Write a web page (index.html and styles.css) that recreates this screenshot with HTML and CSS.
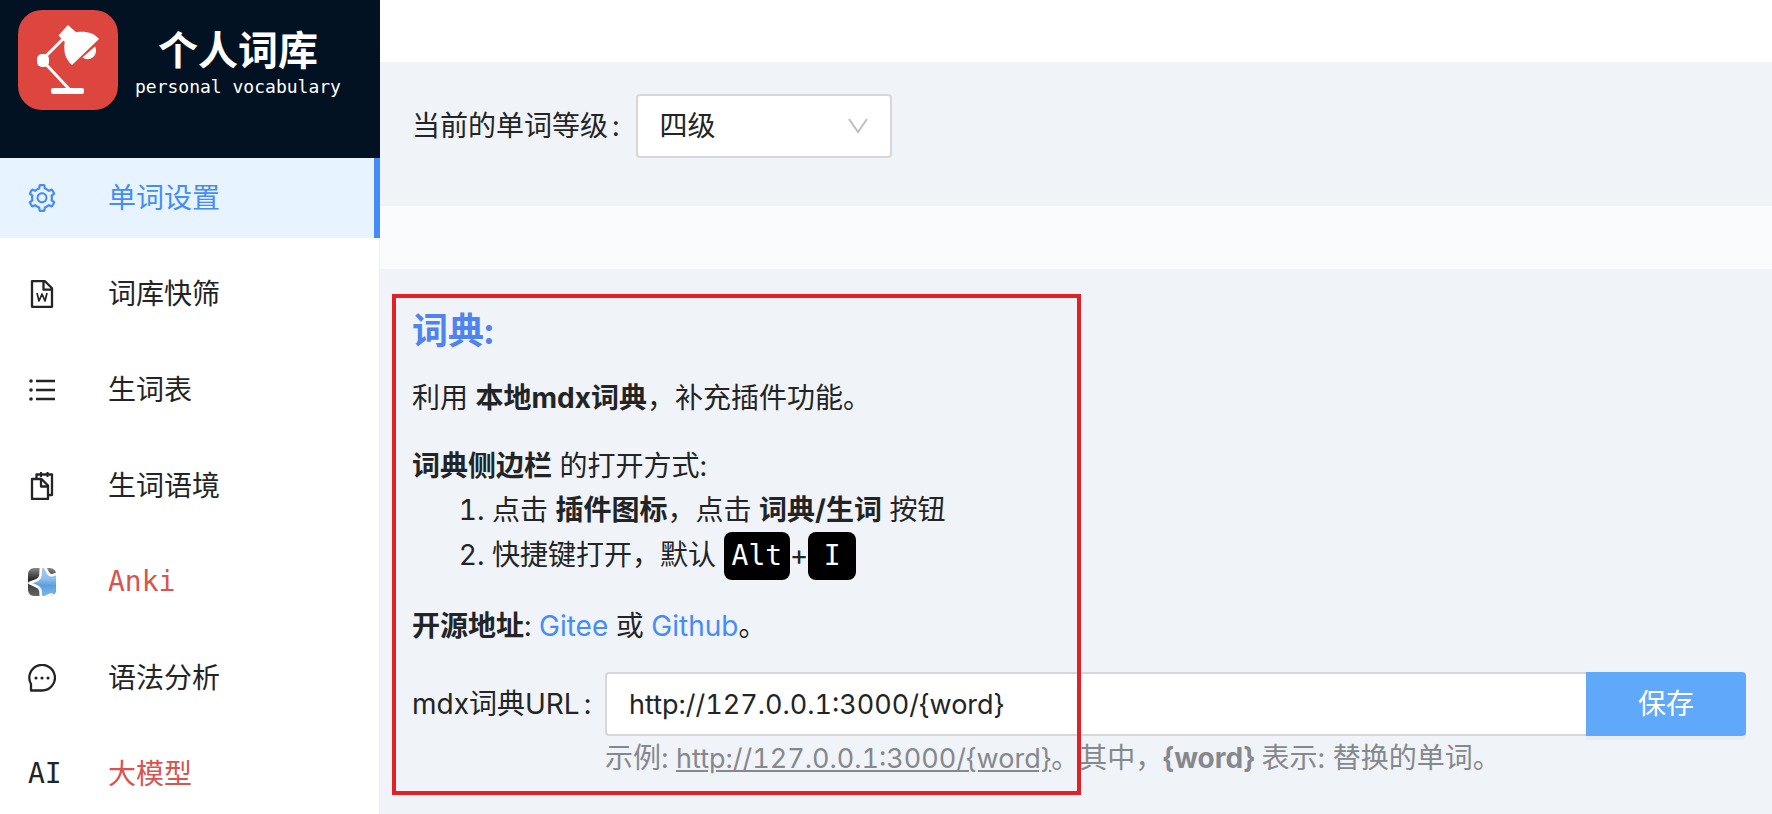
FILE: index.html
```html
<!DOCTYPE html>
<html lang="zh-CN">
<head>
<meta charset="utf-8">
<title>个人词库</title>
<link rel="stylesheet" href="styles.css">
</head>
<body>
<div class="layout">
  <aside class="sidebar">
    <header class="brand">
      <svg class="brand-logo" viewBox="0 0 100 100" aria-hidden="true">
        <rect width="100" height="100" rx="24" fill="#dc463e"/>
        <path d="M24 50 47 27M24 50 51 79" fill="none" stroke="#fff" stroke-width="3"/>
        <g fill="#fff">
          <path d="M41.500 25.500 50 16 58 23 48 32Z" stroke="#fff" stroke-width="1.500" stroke-linejoin="round"/>
          <path d="M55 23C64 20 76 22 81 29L54 55C47 49 45 41 47 30Z"/>
          <path d="M77 36.500A8.500 8.500 0 0 1 64.500 47.500Z"/>
          <rect x="19" y="44" width="12" height="13" rx="5"/>
          <rect x="33" y="78" width="33" height="6" rx="2"/>
        </g>
      </svg>
      <div class="brand-text">
        <h1 class="brand-title">个人词库</h1>
        <p class="brand-subtitle">personal vocabulary</p>
      </div>
    </header>
    <nav class="nav">
      <ul class="menu">
        <li><a class="menu-item menu-item-active" href="#settings" aria-current="page">
          <svg class="icon" viewBox="64 64 896 896" fill="currentColor" aria-hidden="true"><path d="M924.8 625.7l-65.5-56c3.1-19 4.7-38.4 4.7-57.8s-1.6-38.8-4.7-57.8l65.5-56a32.03 32.03 0 009.3-35.2l-.9-2.6a443.74 443.74 0 00-79.7-137.9l-1.8-2.1a32.12 32.12 0 00-35.1-9.5l-81.3 28.9c-30-24.6-63.5-44-99.7-57.6l-15.7-85a32.05 32.05 0 00-25.8-25.7l-2.7-.5c-52.1-9.4-106.9-9.4-159 0l-2.7.5a32.05 32.05 0 00-25.8 25.7l-15.8 85.4a351.86 351.86 0 00-99 57.4l-81.9-29.1a32 32 0 00-35.1 9.5l-1.8 2.1a446.02 446.02 0 00-79.7 137.9l-.9 2.6c-4.5 12.5-.8 26.5 9.3 35.2l66.3 56.6c-3.1 18.8-4.6 38-4.6 57.1 0 19.2 1.5 38.4 4.6 57.1L99 625.5a32.03 32.03 0 00-9.3 35.2l.9 2.6c18.1 50.4 44.9 96.9 79.7 137.9l1.8 2.1a32.12 32.12 0 0035.1 9.5l81.9-29.1c29.8 24.5 63.1 43.9 99 57.4l15.8 85.4a32.05 32.05 0 0025.8 25.7l2.7.5a449.4 449.4 0 00159 0l2.7-.5a32.05 32.05 0 0025.8-25.7l15.7-85a350 350 0 0099.7-57.6l81.3 28.9a32 32 0 0035.1-9.5l1.8-2.1c34.8-41.1 61.6-87.5 79.7-137.9l.9-2.6c4.500-12.300.800-26.300-9.300-35zM788.3 465.9c2.5 15.1 3.8 30.6 3.8 46.1s-1.3 31-3.8 46.1l-6.6 40.1 74.7 63.9a370.03 370.03 0 01-42.6 73.6L721 702.8l-31.4 25.8c-23.9 19.6-50.5 35-79.3 45.8l-38.1 14.3-17.9 97a377.5 377.5 0 01-85 0l-17.9-97.2-37.8-14.5c-28.5-10.8-55-26.2-78.7-45.7l-31.4-25.9-93.4 33.2c-17-22.9-31.2-47.6-42.6-73.6l75.5-64.5-6.5-40c-2.4-14.9-3.7-30.3-3.7-45.5 0-15.3 1.2-30.6 3.7-45.5l6.5-40-75.5-64.5c11.3-26.1 25.6-50.7 42.6-73.6l93.4 33.2 31.4-25.9c23.7-19.5 50.2-34.9 78.7-45.7l37.9-14.3 17.9-97.2c28.1-3.2 56.8-3.2 85 0l17.9 97 38.1 14.3c28.7 10.8 55.4 26.2 79.3 45.8l31.4 25.8 92.8-32.9c17 22.9 31.2 47.6 42.6 73.6L781.8 426l6.5 39.9zM512 326c-97.2 0-176 78.8-176 176s78.8 176 176 176 176-78.8 176-176-78.8-176-176-176zm79.2 255.2A111.6 111.6 0 01512 614c-29.9 0-58-11.7-79.2-32.8A111.6 111.6 0 01400 502c0-29.9 11.7-58 32.8-79.2C454 401.6 482.1 390 512 390c29.9 0 58 11.6 79.2 32.8A111.6 111.6 0 01624 502c0 29.9-11.7 58-32.8 79.2z"/></svg>
          <span>单词设置</span></a></li>
        <li><a class="menu-item" href="#filter">
          <svg class="icon" viewBox="0 0 28 28" fill="none" stroke="currentColor" stroke-width="2.3" stroke-linejoin="round" aria-hidden="true"><path d="M4 1.200h13l7 7v18.600H4zM15.500 1.200v8.500H24"/><path d="M9 13l2 8 3-7 3 7 2-8" stroke-width="1.700"/></svg>
          <span>词库快筛</span></a></li>
        <li><a class="menu-item" href="#words">
          <svg class="icon" viewBox="0 0 28 28" fill="none" stroke="currentColor" stroke-width="2.300" aria-hidden="true"><path d="M8 5h19M8 14h19M8 23h19"/><g fill="currentColor" stroke="none"><circle cx="3" cy="5" r="1.800"/><circle cx="3" cy="14" r="1.800"/><circle cx="3" cy="23" r="1.800"/></g></svg>
          <span>生词表</span></a></li>
        <li><a class="menu-item" href="#context">
          <svg class="icon" viewBox="0 0 28 28" fill="none" stroke="currentColor" stroke-width="2.300" stroke-linejoin="round" aria-hidden="true"><path d="M8.500 6V2.500H24V23h-3"/><path d="M13 0v5M19.500 0v5" stroke-width="2"/><path d="M4 7h9.500l6.500 6.500V27H4zM13 7v7.500h7"/></svg>
          <span>生词语境</span></a></li>
        <li><a class="menu-item menu-item-accent menu-item-mono" href="#anki">
          <svg class="icon" viewBox="0 0 28 28" aria-hidden="true">
            <defs><linearGradient id="star" x1="0" y1="0" x2="0" y2="1"><stop offset="0" stop-color="#a9cdef"/><stop offset=".4" stop-color="#8fbfec"/><stop offset=".6" stop-color="#5b9fe0"/><stop offset="1" stop-color="#8dbdec"/></linearGradient>
            <linearGradient id="plate" x1="0" y1="0" x2="0" y2="1"><stop offset="0" stop-color="#888"/><stop offset=".4" stop-color="#2c2c2c"/><stop offset="1" stop-color="#666"/></linearGradient>
            <clipPath id="tile"><rect width="28" height="28" rx="6"/></clipPath></defs>
            <g clip-path="url(#tile)"><rect width="28" height="28" fill="url(#plate)"/>
            <path d="M13-3 12.500 7Q12 11 8 12.500L1.500 15 8 18Q12 19.500 12.500 23L13 31 23 26.500 31 30V5L25 7Q21 8 19.500 4L16-3Z" fill="url(#star)" stroke="#fff" stroke-width="2.600" stroke-linejoin="round"/></g>
          </svg>
          <span>Anki</span></a></li>
        <li><a class="menu-item" href="#grammar">
          <svg class="icon" viewBox="0 0 28 28" fill="none" stroke="currentColor" stroke-width="2.300" aria-hidden="true"><path d="M3 26.500H14A12.800 12.800 0 1 0 3 20z" stroke-linejoin="round"/><g fill="currentColor" stroke="none"><circle cx="8" cy="14" r="1.600"/><circle cx="14" cy="14" r="1.600"/><circle cx="20" cy="14" r="1.600"/></g></svg>
          <span>语法分析</span></a></li>
        <li><a class="menu-item menu-item-accent" href="#model">
          <span class="icon icon-text">AI</span>
          <span>大模型</span></a></li>
      </ul>
    </nav>
  </aside>

  <main class="content">
    <div class="topbar"></div>
    <section class="panel level-panel">
      <label class="field-label" for="level">当前的单词等级<span class="colon">:</span></label>
      <div class="select">
        <select id="level" class="select-box"><option>四级</option><option>六级</option></select>
        <svg class="select-arrow" viewBox="0 0 20 16" fill="none" stroke="#bfbfbf" stroke-width="2" aria-hidden="true"><path d="M1 1l9 13 9-13"/></svg>
      </div>
    </section>
    <section class="panel dict-panel">
      <h2 class="panel-title">词典:</h2>
      <p class="text">利用 <strong>本地mdx词典</strong>，补充插件功能。</p>
      <div class="text">
        <p><strong>词典侧边栏</strong> 的打开方式:</p>
        <ol class="steps">
          <li>点击 <strong>插件图标</strong>，点击 <strong>词典/生词</strong> 按钮</li>
          <li>快捷键打开，默认 <kbd>Alt</kbd>+<kbd>I</kbd></li>
        </ol>
      </div>
      <p class="text"><strong>开源地址</strong>: <a class="link" href="#gitee">Gitee</a> 或 <a class="link" href="#github">Github</a>。</p>
      <form class="url-form">
        <label class="field-label" for="url">mdx词典URL<span class="colon">:</span></label>
        <div class="url-field">
          <div class="url-group">
            <input id="url" class="url-input" type="text" value="http://127.0.0.1:3000/{word}">
            <button class="save" type="button">保存</button>
          </div>
          <p class="hint">示例: <u class="hint-url">http://127.0.0.1:3000/{word}</u>。其中，<strong>{word}</strong> 表示: 替换的单词。</p>
        </div>
      </form>
      <div class="highlight"></div>
    </section>
  </main>
</div>
</body>
</html>
```

FILE: styles.css
```css
* {
  box-sizing: border-box;
}

body,
h1,
h2,
p,
ul,
ol {
  margin: 0;
  padding: 0;
}

body {
  font-family: Inter, "Noto Sans CJK SC", sans-serif;
  font-size: 28px;
  line-height: 44px;
  font-variant-numeric: tabular-nums;
  color: #222426;
  background: #f0f3f8;
}

.layout {
  display: flex;
  height: 100vh;
  overflow: hidden;
}

.sidebar {
  display: flex;
  flex: none;
  flex-direction: column;
  width: 380px;
  background: #fff;
}

.brand {
  display: flex;
  flex: none;
  gap: 17px;
  height: 158px;
  padding: 10px 18px;
  background: #021222;
  color: #fff;
}

.brand-logo {
  flex: none;
  width: 100px;
  height: 100px;
}

.brand-text {
  padding-top: 17px;
  text-align: center;
}

.brand-title {
  font-size: 40px;
  line-height: 48px;
  font-weight: 700;
}

.brand-subtitle {
  font-family: "DejaVu Sans Mono", monospace;
  font-size: 18px;
  line-height: 24px;
}

.nav {
  flex: 1;
  box-shadow: inset -1px 0 #eceef0;
}

.menu {
  display: flex;
  flex-direction: column;
  gap: 16px;
  list-style: none;
}

.menu-item {
  display: flex;
  align-items: center;
  gap: 52px;
  height: 80px;
  padding-left: 28px;
  color: #222426;
  text-decoration: none;
}

.menu-item-active {
  background: #e7f4ff;
  border-right: 6px solid #468cf5;
  color: #468cf5;
}

.menu-item-accent {
  color: #d9534f;
}

.menu-item-mono,
.icon-text {
  font-family: "DejaVu Sans Mono", monospace;
}

.icon {
  flex: none;
  width: 28px;
  height: 28px;
}

.icon-text {
  color: #222426;
  line-height: 28px;
}

.content {
  flex: 1;
  min-width: 0;
}

.topbar {
  height: 62px;
  background: #fff;
}

.panel {
  padding: 32px 26px 32px 32px;
  background: #f0f3f8;
}

.level-panel {
  display: flex;
  height: 144px;
}

.field-label {
  flex: none;
  line-height: 64px;
  white-space: nowrap;
}

.colon {
  margin: 0 16px 0 4px;
}

.select {
  position: relative;
  width: 256px;
  height: 64px;
}

.select-box {
  width: 100%;
  height: 100%;
  padding: 0 22px;
  appearance: none;
  border: 2px solid #d5d7da;
  border-radius: 4px;
  background: #fff;
  color: inherit;
  font: inherit;
}

.select-arrow {
  position: absolute;
  top: 24px;
  right: 24px;
  width: 20px;
  height: 16px;
  pointer-events: none;
}

.dict-panel {
  position: relative;
  border-top: 63px solid #fafbfd;
  min-height: 608px;
}

.panel-title {
  margin-bottom: 15px;
  font-size: 36px;
  line-height: 60px;
  font-weight: 700;
  color: #4f83ee;
}

.text {
  margin-bottom: 24px;
}

.steps {
  padding-left: 80px;
}

kbd {
  display: inline-block;
  min-width: 48px;
  padding: 0 8px;
  border-radius: 8px;
  background: #000;
  color: #fff;
  font-family: "DejaVu Sans Mono", monospace;
  font-size: 28px;
  line-height: 48px;
  text-align: center;
}

.link {
  color: #468cf5;
  text-decoration: none;
}

.url-form {
  display: grid;
  grid-template-columns: 193px 1fr;
}

.url-field {
  min-width: 0;
}

.url-group {
  display: flex;
  height: 64px;
}

.url-input {
  flex: 1;
  min-width: 0;
  padding: 0 22px;
  border: 2px solid #d5d7da;
  border-right: 0;
  border-radius: 4px 0 0 4px;
  background: #fff;
  color: inherit;
  font-family: inherit;
  font-size: 27px;
  font-variant-numeric: tabular-nums;
}

.save {
  width: 160px;
  border: 0;
  border-radius: 0 4px 4px 0;
  background: #5fa8fa;
  box-shadow: 0 4px 0 #e9edf2;
  color: #fff;
  font: inherit;
}

.hint {
  color: #85888c;
}

.hint-url {
  font-size: 27px;
}

.highlight {
  position: absolute;
  top: 25px;
  left: 12px;
  width: 689px;
  height: 501px;
  border: 4px solid #e32028;
  pointer-events: none;
}
```
